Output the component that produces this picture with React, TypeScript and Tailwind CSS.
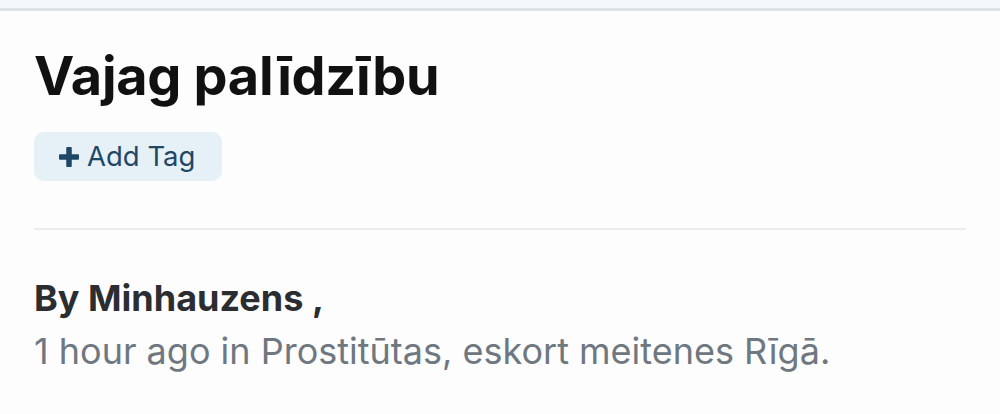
function PlusIcon() {
  return (
    <svg viewBox="0 0 20 20" className="size-[20px] shrink-0" fill="currentColor">
      <rect x="0" y="7.25" width="20" height="5.5" rx="1" />
      <rect x="7.25" y="0" width="5.5" height="20" rx="1" />
    </svg>
  );
}

export default function App() {
  return (
    <div className="h-[414px] w-[1000px] overflow-hidden bg-[#fdfdfd] font-['Inter',sans-serif]">
      <div className="h-[8px] bg-[#f2f8fc]" />
      <div className="h-[3px] bg-[#dde2e5]" />
      <section className="flex flex-col px-[34px] pt-[33px]">
        <h1 className="text-[54px] font-bold leading-[64px] tracking-[-0.3px] text-[#111111]">
          Vajag palīdzību
        </h1>
        <div className="mt-[24px]">
          <button className="flex h-[49px] w-[188px] items-center gap-[8px] rounded-[10px] bg-[#e6f0f7] pl-[25px] text-[27.5px] text-[#1f4766]">
            <PlusIcon />
            Add Tag
          </button>
        </div>
        <div className="mt-[47px] h-[2px] w-[932px] bg-[#ececec]" />
        <div className="mt-[46px] flex flex-col">
          <p className="text-[36px] font-bold leading-[44px] text-[#2b2d30]">
            By Minhauzens ,
          </p>
          <p className="mt-[9px] text-[36px] leading-[44px] text-[#6f7780]">
            1 hour ago in Prostitūtas, eskort meitenes Rīgā.
          </p>
        </div>
      </section>
    </div>
  );
}
